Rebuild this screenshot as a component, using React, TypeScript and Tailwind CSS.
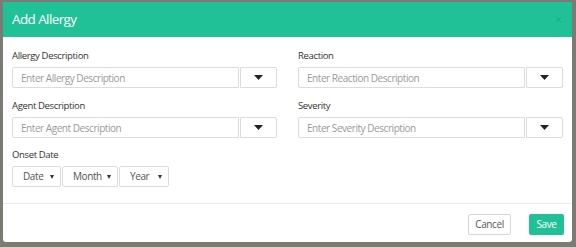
import { X } from 'lucide-react';

const font = { fontFamily: '"Open Sans", "Liberation Sans", sans-serif' };

function Caret() {
  return (
    <svg width="9" height="5" viewBox="0 0 9 5" className="text-[#222]">
      <path d="M0 0 H9 L4.5 5 Z" fill="currentColor" />
    </svg>
  );
}

function SmallCaret() {
  return (
    <svg width="4" height="4" viewBox="0 0 4 4" className="text-[#333]">
      <path d="M0 0 H4 L2 4 Z" fill="currentColor" />
    </svg>
  );
}

function Field({ label, placeholder }: { label: string; placeholder: string }) {
  return (
    <div className="flex flex-col">
      <label className="text-[9.5px] leading-[14px] tracking-[-0.35px] text-[#333] mb-[4px]">{label}</label>
      <div className="flex">
        <input
          placeholder={placeholder}
          className="flex-1 min-w-0 h-[21px] border border-[#dcdcdc] rounded-l-[2px] px-[8px] text-[10px] tracking-[-0.45px] placeholder:text-[#9a9a9a] outline-none"
          style={font}
        />
        <button className="w-[37px] h-[21px] ml-px border border-[#dcdcdc] rounded-r-[2px] flex items-center justify-center bg-white">
          <Caret />
        </button>
      </div>
    </div>
  );
}

function DateSelect({ label, width }: { label: string; width: string }) {
  return (
    <div className={`${width} h-[21px] border border-[#dcdcdc] rounded-[2px] flex items-center justify-between pl-[10px] pr-[6px] text-[10px] tracking-[-0.4px] text-[#555]`}>
      <span>{label}</span>
      <SmallCaret />
    </div>
  );
}

export default function App() {
  return (
    <div className="w-[576px] h-[247px] bg-[#7b7a73] pl-[3px] pt-[2px] overflow-hidden" style={font}>
      <div className="w-[569px] h-[240px] bg-white rounded-b-[3px] overflow-hidden flex flex-col">
        <div className="h-[35px] bg-[#20c196] flex items-center justify-between pl-[9px] pr-[9px] shrink-0">
          <h1 className="text-[13.5px] tracking-[-0.6px] text-white">Add Allergy</h1>
          <X className="w-[9px] h-[9px] text-[#169d78]" strokeWidth={2} />
        </div>

        <div className="px-[9px] pt-[12px]">
          <div className="grid grid-cols-2 gap-x-[21px] gap-y-[11px]">
            <Field label="Allergy Description" placeholder="Enter Allergy Description" />
            <Field label="Reaction" placeholder="Enter Reaction Description" />
            <Field label="Agent Description" placeholder="Enter Agent Description" />
            <Field label="Severity" placeholder="Enter Severity Description" />
          </div>

          <div className="mt-[10px]">
            <div className="text-[9.5px] leading-[14px] tracking-[-0.35px] text-[#333] mb-[4px]">Onset Date</div>
            <div className="flex gap-px">
              <DateSelect label="Date" width="w-[49px]" />
              <DateSelect label="Month" width="w-[56px]" />
              <DateSelect label="Year" width="w-[50px]" />
            </div>
          </div>
        </div>

        <div className="mt-[16px] border-t border-[#ebebeb] flex justify-end items-center gap-[18px] pr-[8px] pt-[10px]">
          <button className="w-[43px] h-[21px] border border-[#d6d6d6] rounded-[2px] text-[10px] tracking-[-0.4px] text-[#555] bg-white">
            Cancel
          </button>
          <button className="w-[35px] h-[21px] rounded-[2px] text-[10px] tracking-[-0.4px] text-white bg-[#20c196]">
            Save
          </button>
        </div>
      </div>
    </div>
  );
}
